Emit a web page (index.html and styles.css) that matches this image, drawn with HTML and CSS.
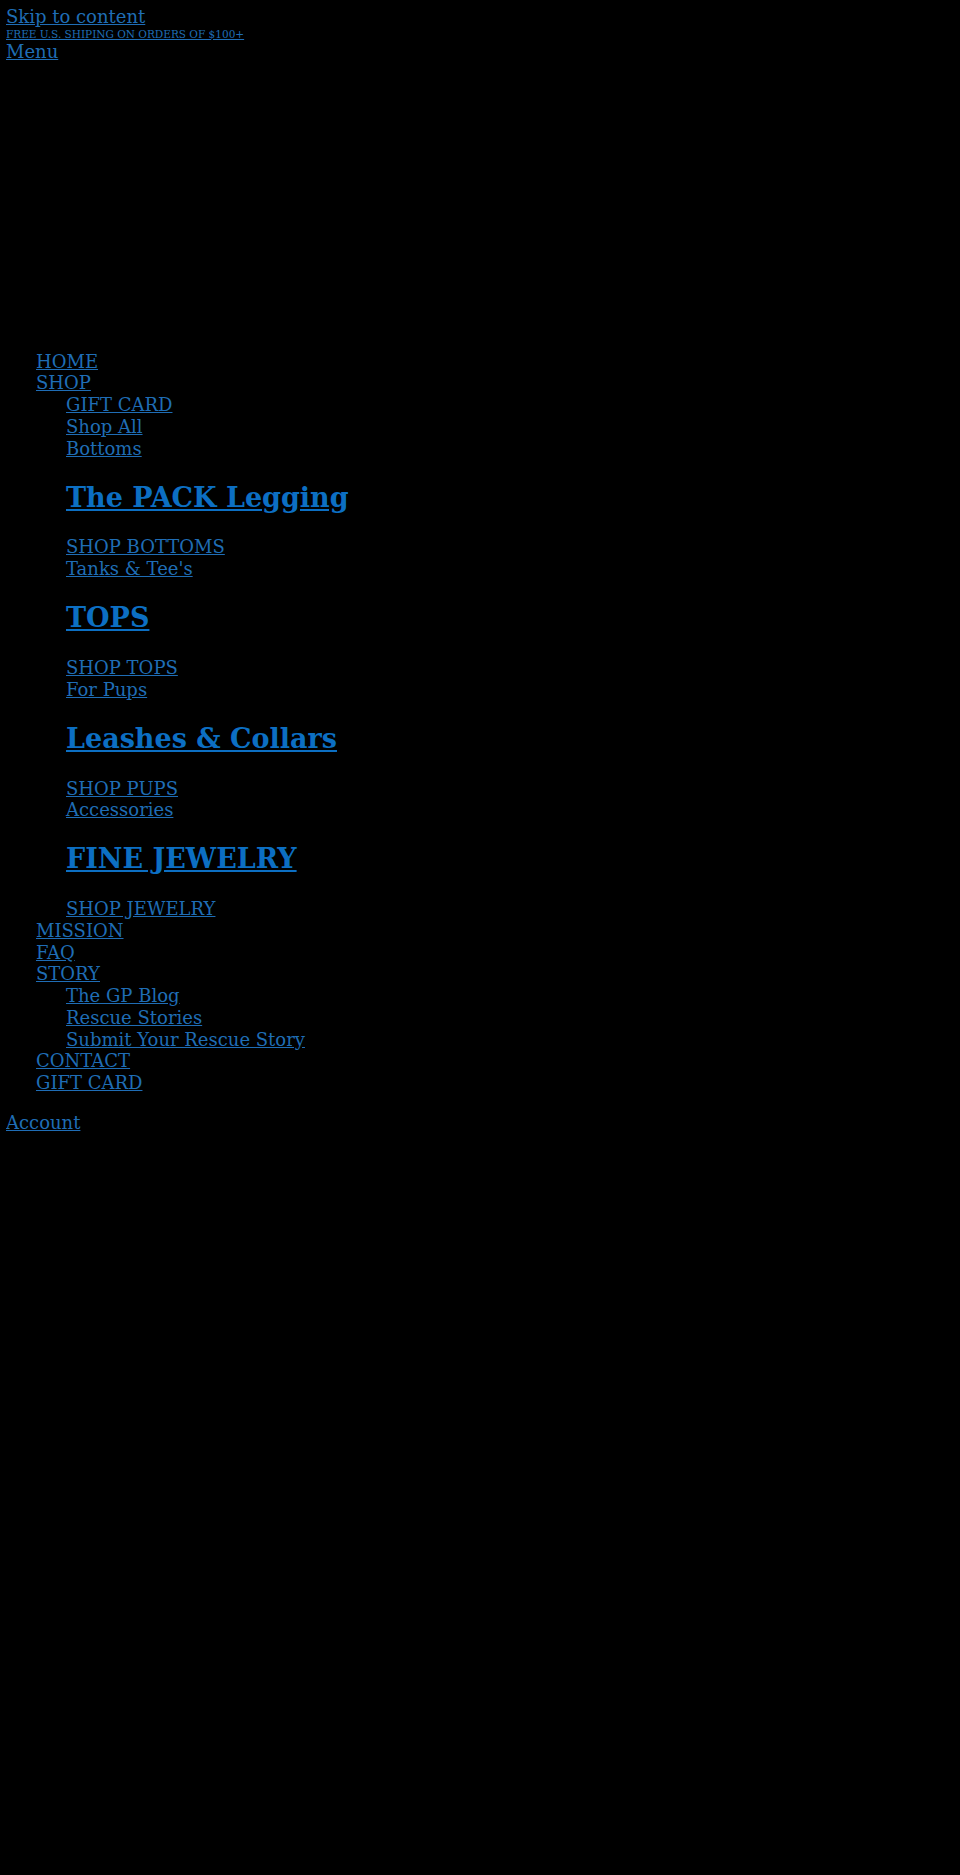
FILE: index.html
```html
<!DOCTYPE html>
<html lang="en">
<head>
<meta charset="utf-8">
<title>Shop</title>
<link rel="stylesheet" href="styles.css">
</head>
<body>
<a class="link" href="#main">Skip to content</a>
<div class="announce"><a class="link" href="#">FREE U.S. SHIPING ON ORDERS OF $100+</a></div>
<div class="menu-line"><a class="link" href="#">Menu</a></div>
<div class="logo-space"></div>
<ul class="nav">
  <li><a class="link" href="#">HOME</a></li>
  <li><a class="link" href="#">SHOP</a>
    <ul class="sub">
      <li><a class="link" href="#">GIFT CARD</a></li>
      <li><a class="link" href="#">Shop All</a></li>
      <li><a class="link" href="#">Bottoms</a></li>
      <li><h2 class="promo"><a class="link" href="#">The PACK Legging</a></h2></li>
      <li><a class="link" href="#">SHOP BOTTOMS</a></li>
      <li><a class="link" href="#">Tanks &amp; Tee's</a></li>
      <li><h2 class="promo"><a class="link" href="#">TOPS</a></h2></li>
      <li><a class="link" href="#">SHOP TOPS</a></li>
      <li><a class="link" href="#">For Pups</a></li>
      <li><h2 class="promo"><a class="link" href="#">Leashes &amp; Collars</a></h2></li>
      <li><a class="link" href="#">SHOP PUPS</a></li>
      <li><a class="link" href="#">Accessories</a></li>
      <li><h2 class="promo"><a class="link" href="#">FINE JEWELRY</a></h2></li>
      <li><a class="link" href="#">SHOP JEWELRY</a></li>
    </ul>
  </li>
  <li><a class="link" href="#">MISSION</a></li>
  <li><a class="link" href="#">FAQ</a></li>
  <li><a class="link" href="#">STORY</a>
    <ul class="sub">
      <li><a class="link" href="#">The GP Blog</a></li>
      <li><a class="link" href="#">Rescue Stories</a></li>
      <li><a class="link" href="#">Submit Your Rescue Story</a></li>
    </ul>
  </li>
  <li><a class="link" href="#">CONTACT</a></li>
  <li><a class="link" href="#">GIFT CARD</a></li>
</ul>
<a class="link" id="main" href="#">Account</a>
</body>
</html>
```

FILE: styles.css
```css
html {
  background: #000;
}
body {
  margin: 6px;
  background: #000;
  color: #1f6db5;
  font-family: "DejaVu Serif", serif;
  font-size: 18px;
  line-height: 1.21;
}
.link {
  color: #1f6db5;
  text-decoration: underline;
}
.announce {
  font-size: 10.5px;
  line-height: 13px;
}
.logo-space {
  height: 270px;
}
.nav {
  margin: 18px 0;
  padding-left: 30px;
  list-style: none;
}
.sub {
  margin: 0;
  padding-left: 30px;
  list-style: none;
}
.promo {
  font-size: 27px;
  font-weight: bold;
  margin: 22.2px 0;
}
.promo .link {
  color: #0c6fc3;
}
```
